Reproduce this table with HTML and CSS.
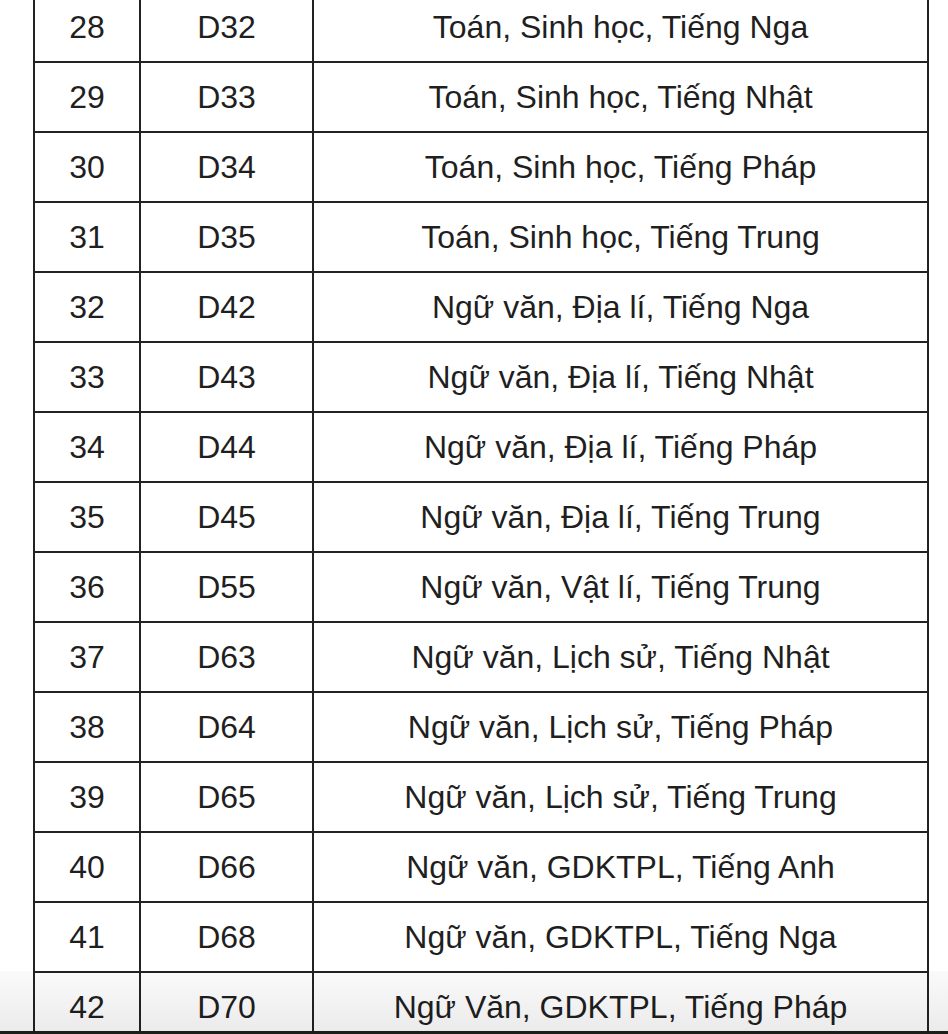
FILE: index.html
```html
<!DOCTYPE html>
<html lang="vi">
<head>
<meta charset="utf-8">
<title>Tổ hợp môn</title>
<link rel="stylesheet" href="styles.css">
</head>
<body>
<div class="page">
  <table class="combo">
    <colgroup><col class="c1"><col class="c2"><col class="c3"></colgroup>
    <tbody>
      <tr><td>28</td><td>D32</td><td>Toán, Sinh học, Tiếng Nga</td></tr>
      <tr><td>29</td><td>D33</td><td>Toán, Sinh học, Tiếng Nhật</td></tr>
      <tr><td>30</td><td>D34</td><td>Toán, Sinh học, Tiếng Pháp</td></tr>
      <tr><td>31</td><td>D35</td><td>Toán, Sinh học, Tiếng Trung</td></tr>
      <tr><td>32</td><td>D42</td><td>Ngữ văn, Địa lí, Tiếng Nga</td></tr>
      <tr><td>33</td><td>D43</td><td>Ngữ văn, Địa lí, Tiếng Nhật</td></tr>
      <tr><td>34</td><td>D44</td><td>Ngữ văn, Địa lí, Tiếng Pháp</td></tr>
      <tr><td>35</td><td>D45</td><td>Ngữ văn, Địa lí, Tiếng Trung</td></tr>
      <tr><td>36</td><td>D55</td><td>Ngữ văn, Vật lí, Tiếng Trung</td></tr>
      <tr><td>37</td><td>D63</td><td>Ngữ văn, Lịch sử, Tiếng Nhật</td></tr>
      <tr><td>38</td><td>D64</td><td>Ngữ văn, Lịch sử, Tiếng Pháp</td></tr>
      <tr><td>39</td><td>D65</td><td>Ngữ văn, Lịch sử, Tiếng Trung</td></tr>
      <tr><td>40</td><td>D66</td><td>Ngữ văn, GDKTPL, Tiếng Anh</td></tr>
      <tr><td>41</td><td>D68</td><td>Ngữ văn, GDKTPL, Tiếng Nga</td></tr>
      <tr><td>42</td><td>D70</td><td>Ngữ Văn, GDKTPL, Tiếng Pháp</td></tr>
    </tbody>
  </table>
  <div class="shade"></div>
  <div class="bar"></div>
</div>
</body>
</html>
```
FILE: styles.css
```css
html, body {
  margin: 0;
  padding: 0;
  background: #ffffff;
}
body {
  width: 948px;
  height: 1034px;
  overflow: hidden;
}
.page {
  position: relative;
  width: 948px;
  height: 1034px;
  overflow: hidden;
}
.combo {
  border-collapse: collapse;
  margin-top: -9px;
  margin-left: 33px;
  width: 894px;
  table-layout: fixed;
  font-family: "Liberation Sans", Arial, Helvetica, sans-serif;
  font-size: 32px;
  color: #1f1f1f;
}
.c1 { width: 106px; }
.c2 { width: 173px; }
.c3 { width: 615px; }
.combo td {
  border: 2px solid #222222;
  height: 70px;
  padding: 0;
  text-align: center;
  vertical-align: middle;
  box-sizing: border-box;
}
.shade {
  position: absolute;
  left: 0;
  right: 0;
  bottom: 3px;
  height: 60px;
  background: linear-gradient(to bottom, rgba(0,0,0,0.02), rgba(0,0,0,0.08));
  pointer-events: none;
}
.bar {
  position: absolute;
  left: 0;
  right: 0;
  bottom: 0;
  height: 3px;
  background: #1d1d1a;
}
```
